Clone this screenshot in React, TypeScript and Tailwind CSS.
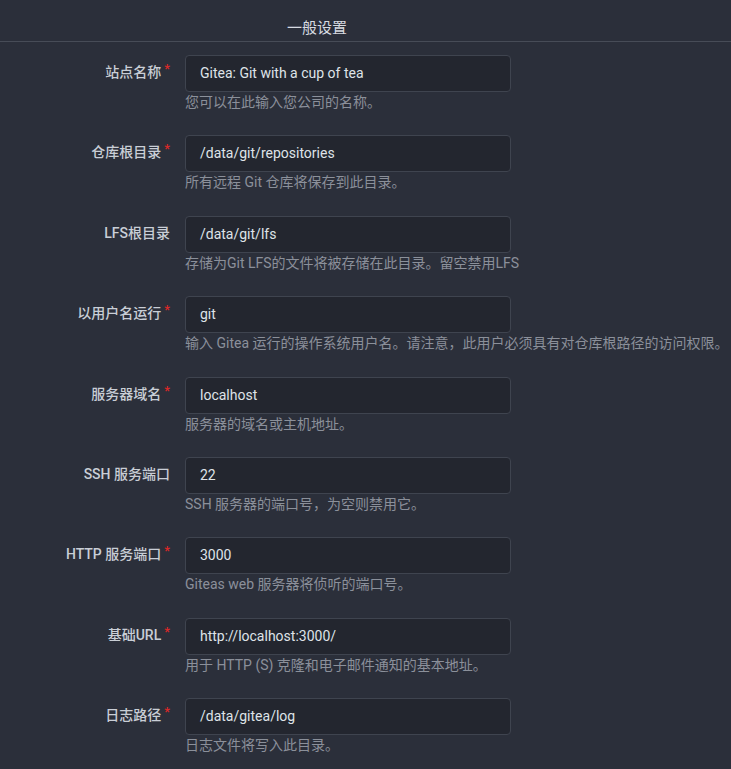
import React from "react";

interface Field {
  label: string;
  required: boolean;
  value: string;
  help: string;
}

const fields: Field[] = [
  { label: "站点名称", required: true, value: "Gitea: Git with a cup of tea", help: "您可以在此输入您公司的名称。" },
  { label: "仓库根目录", required: true, value: "/data/git/repositories", help: "所有远程 Git 仓库将保存到此目录。" },
  { label: "LFS根目录", required: false, value: "/data/git/lfs", help: "存储为Git LFS的文件将被存储在此目录。留空禁用LFS" },
  { label: "以用户名运行", required: true, value: "git", help: "输入 Gitea 运行的操作系统用户名。请注意，此用户必须具有对仓库根路径的访问权限。" },
  { label: "服务器域名", required: true, value: "localhost", help: "服务器的域名或主机地址。" },
  { label: "SSH 服务端口", required: false, value: "22", help: "SSH 服务器的端口号，为空则禁用它。" },
  { label: "HTTP 服务端口", required: true, value: "3000", help: "Giteas web 服务器将侦听的端口号。" },
  { label: "基础URL", required: true, value: "http://localhost:3000/", help: "用于 HTTP (S) 克隆和电子邮件通知的基本地址。" },
  { label: "日志路径", required: true, value: "/data/gitea/log", help: "日志文件将写入此目录。" },
];

const font = { fontFamily: 'Roboto, "Noto Sans CJK SC", sans-serif' };

export default function App() {
  return (
    <div className="min-h-[769px] w-[731px] overflow-hidden bg-[#2b2f3a] text-[#d2d6dd]" style={font}>
      {/* section header */}
      <div className="border-b border-[#474c57]">
        <div className="flex w-[634px] justify-center pt-[18px] pb-[3px] text-[15px] leading-[20px] text-[#d7dbe1]">
          一般设置
        </div>
      </div>

      <div className="flex flex-col gap-y-[24.4px] pt-[13px]">
        {fields.map((f) => (
          <div key={f.label} className="flex">
            <label className="w-[170px] shrink-0 whitespace-nowrap pt-[8px] text-right text-[14px] font-medium leading-[18px] text-[#c9ced6]">
              {f.label}
              {f.required && <span className="relative -top-[4px] ml-[3px] text-[13px] text-[#db2828]">*</span>}
            </label>
            <div className="ml-[15px] flex flex-col">
              <div className="flex h-[37px] w-[326px] items-center rounded-[4px] border border-[#3f444f] bg-[#23262f] px-[14px] text-[14px] text-[#dfe3e8]">
                {f.value}
              </div>
              <div className="mt-[1px] whitespace-nowrap text-[14px] leading-[18px] text-[#8b909a]">{f.help}</div>
            </div>
          </div>
        ))}
      </div>
    </div>
  );
}
